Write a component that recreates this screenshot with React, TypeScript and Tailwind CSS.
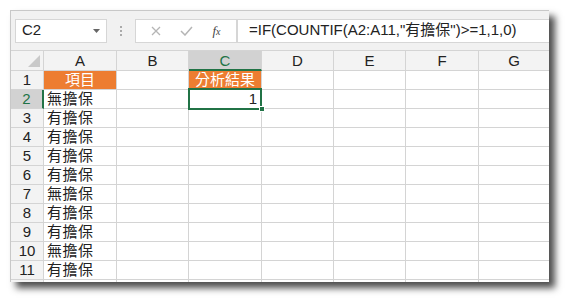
import React from 'react';

const cols = ['A', 'B', 'C', 'D', 'E', 'F', 'G'];
const widths = ['w-[73px]', 'w-[72px]', 'w-[73px]', 'w-[72px]', 'w-[72px]', 'w-[73px]', 'w-[71px]'];
const items = ['無擔保', '有擔保', '有擔保', '有擔保', '有擔保', '無擔保', '有擔保', '有擔保', '無擔保', '有擔保'];

const font = "font-['Liberation_Sans','Noto_Sans_CJK_TC',sans-serif]";

function Cell({ row, col }: { row: number; col: number }) {
  const base = `${widths[col]} h-[19px] shrink-0 border-r border-b border-[#d4d4d4] relative text-[15px] leading-[18px] text-[#222]`;
  if (row === 1 && (col === 0 || col === 2)) {
    return (
      <div className={`${widths[col]} h-[19px] shrink-0 border-r border-b border-[#d4d4d4] bg-[#ed7d31] text-white text-[15px] leading-[18px] text-center`}>
        {col === 0 ? '項目' : '分析結果'}
      </div>
    );
  }
  if (col === 0 && row >= 2) {
    return <div className={`${base} pl-[3px] tracking-[0.5px]`}>{items[row - 2]}</div>;
  }
  if (row === 2 && col === 2) {
    return (
      <div className={`${base} text-right pr-[4px] z-10`}>
        1
        <div className="absolute -left-px -top-[2px] right-[-1px] bottom-[-2px] border-2 border-[#217346] pointer-events-none" />
        <div className="absolute right-[-4px] bottom-[-4px] w-[6px] h-[6px] bg-[#217346] border border-white" />
      </div>
    );
  }
  return <div className={base} />;
}

export default function App() {
  return (
    <div className={`w-[567px] h-[301px] bg-white overflow-hidden ${font}`}>
      <div className="ml-[10px] mt-[10px] w-[539px] h-[272px] bg-white border-t border-l border-[#c8c8c8] shadow-[6px_6px_7px_rgba(0,0,0,0.7)] overflow-hidden">
        {/* formula bar */}
        <div className="h-[40px] bg-[#f1f1f1] flex items-center pl-[4px] border-b border-[#d4d4d4]">
          <div className="w-[92px] h-[24px] bg-white border border-[#d6d6d6] flex items-center justify-between pl-[6px] pr-[6px] text-[15px] text-[#222]">
            <span>C2</span>
            <svg width="7" height="4" viewBox="0 0 7 4"><path d="M0 0h7L3.5 4z" fill="#666" /></svg>
          </div>
          <div className="w-[28px] flex flex-col items-center gap-[2px]">
            <span className="w-[2px] h-[2px] bg-[#aaa]" />
            <span className="w-[2px] h-[2px] bg-[#aaa]" />
            <span className="w-[2px] h-[2px] bg-[#aaa]" />
          </div>
          <div className="w-[102px] h-[24px] bg-white border border-[#d6d6d6] flex items-center justify-around px-[6px]">
            <svg width="10" height="10" viewBox="0 0 10 10"><path d="M1 1l8 8M9 1l-8 8" stroke="#b5b5b5" strokeWidth="1.3" /></svg>
            <svg width="13" height="10" viewBox="0 0 13 10"><path d="M1 5l4 4 7-8" stroke="#b5b5b5" strokeWidth="1.5" fill="none" /></svg>
            <span className="font-['Liberation_Serif',serif] italic text-[13px] text-[#444]">f<span className="text-[10px]">x</span></span>
          </div>
          <div className="flex-1 h-[24px] bg-white border border-[#d6d6d6] border-r-0 flex items-center pl-[11px] text-[15px] text-[#222] whitespace-nowrap">
            =IF(COUNTIF(A2:A11,"有擔保")&gt;=1,1,0)
          </div>
        </div>
        {/* column headers */}
        <div className="flex h-[20px] bg-[#f3f3f3]">
          <div className="w-[33px] shrink-0 border-r border-b border-[#d4d4d4] relative">
            <svg className="absolute right-[3px] bottom-[3px]" width="12" height="12" viewBox="0 0 12 12"><path d="M12 0v12H0z" fill="#c9c9c9" /></svg>
          </div>
          {cols.map((c, i) =>
            <div
              key={c}
              className={`${widths[i]} shrink-0 border-r border-[#d4d4d4] text-center text-[15px] leading-[19px] ${i === 2 ? 'bg-[#d2d2d2] border-b-2 border-b-[#217346] text-[#217346] leading-[18px]' : 'border-b text-[#222]'}`}
            >
              {c}
            </div>
          )}
        </div>
        {/* rows */}
        {Array.from({ length: 12 }, (_, r) => r + 1).map((row) =>
          <div key={row} className="flex">
            <div className={`w-[33px] h-[19px] shrink-0 border-b border-[#d4d4d4] text-center text-[15px] leading-[18px] ${row === 2 ? 'bg-[#d2d2d2] text-[#217346] border-r-2 border-r-[#217346]' : 'bg-[#f3f3f3] text-[#222] border-r'}`}>
              {row <= 11 ? row : ''}
            </div>
            {cols.map((c, i) => <Cell key={c} row={row} col={i} />)}
          </div>
        )}
      </div>
    </div>
  );
}
